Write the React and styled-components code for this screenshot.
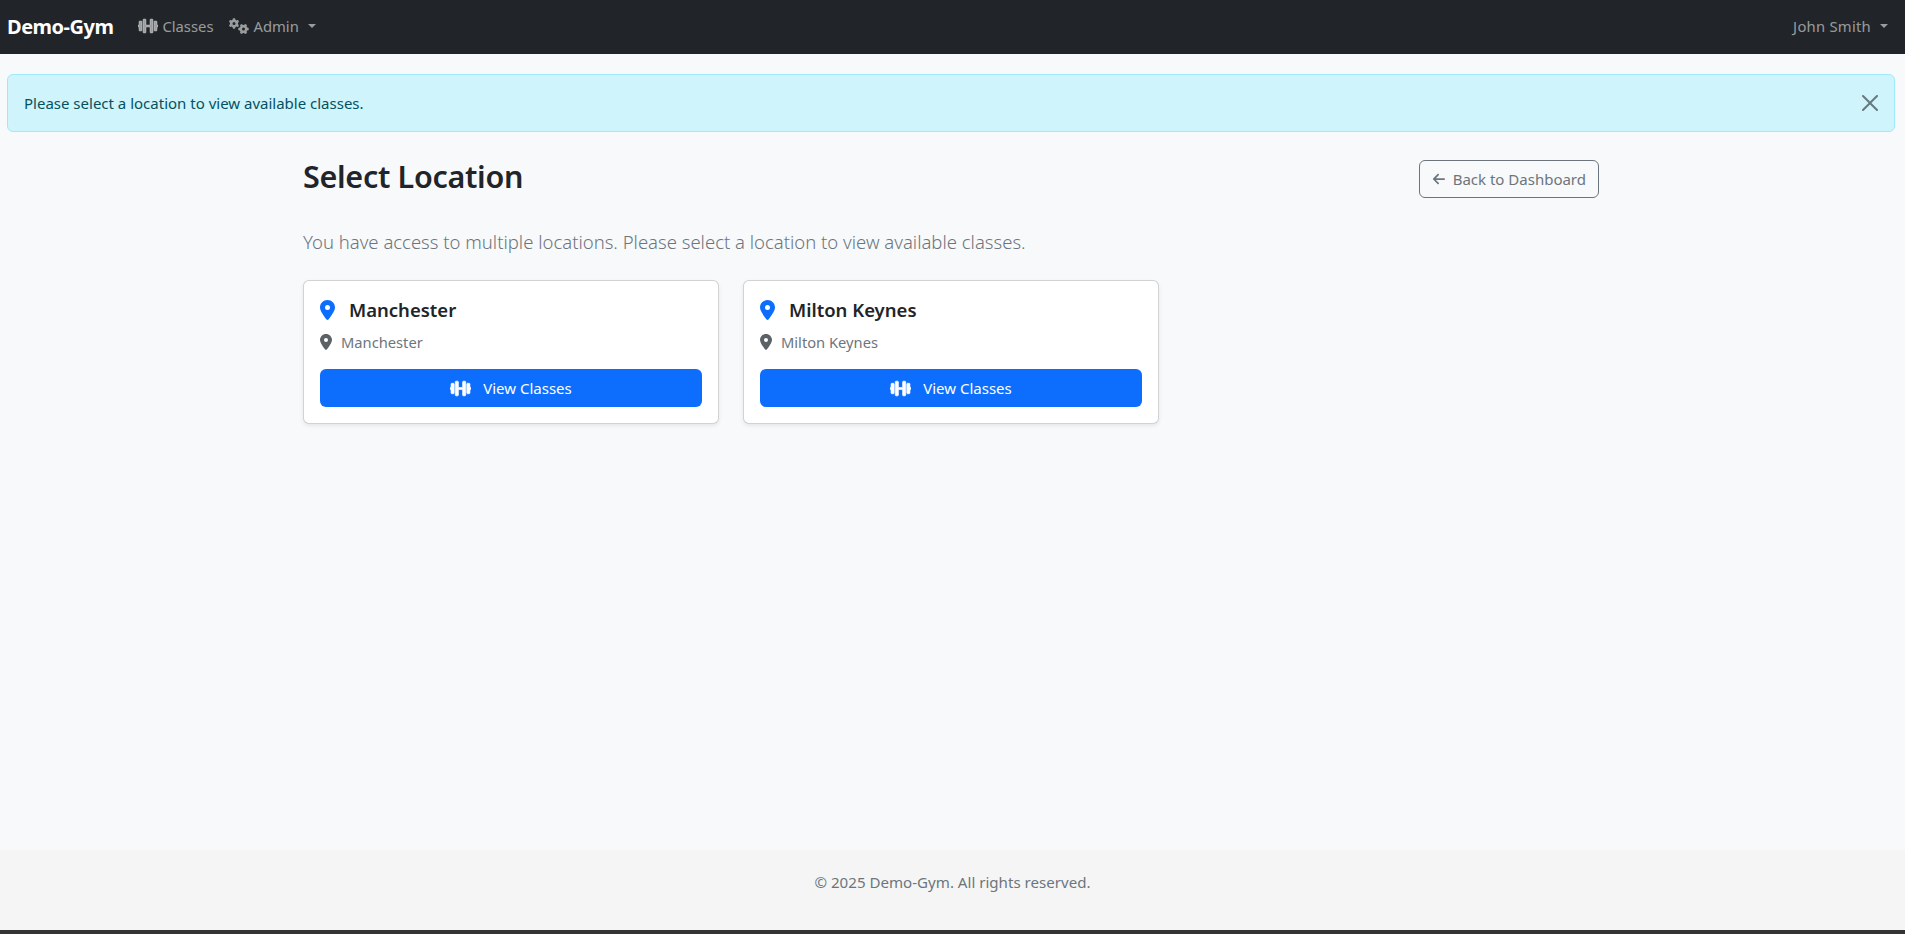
import React from 'react';
import styled, { createGlobalStyle } from 'styled-components';
import { FaDumbbell } from 'react-icons/fa';
import { FaGears, FaLocationDot, FaArrowLeft } from 'react-icons/fa6';

const GlobalStyle = createGlobalStyle`
  html, body {
    margin: 0;
    padding: 0;
    background-color: #f8f9fa;
  }
  body {
    font-family: "Noto Sans", "Open Sans", sans-serif;
    font-size: 15px;
    color: #212529;
  }
  * {
    box-sizing: border-box;
  }
`;

const Page = styled.div`
  display: flex;
  flex-direction: column;
  height: 934px;
  overflow: hidden;
`;

const Navbar = styled.nav`
  display: flex;
  align-items: center;
  justify-content: space-between;
  height: 54px;
  padding: 0 17px 2px 7px;
  background-color: #212529;
  flex-shrink: 0;
`;

const NavLeft = styled.div`
  display: flex;
  align-items: center;
`;

const Brand = styled.a`
  font-size: 20px;
  font-weight: 700;
  color: #fff;
  margin-right: 25px;
  letter-spacing: -0.5px;
`;

const NavItem = styled.a`
  display: flex;
  align-items: center;
  gap: 4px;
  font-size: 14.8px;
  color: rgba(255, 255, 255, 0.55);
  margin-right: 16px;
  &:last-child {
    margin-right: 0;
  }
  svg {
    font-size: 20px;
  }
`;

const UserItem = styled(NavItem)`
  letter-spacing: 0.25px;
`;

const Dumbbell = styled(FaDumbbell)`
  stroke-width: 20px;
`;

const Caret = styled.span`
  display: inline-block;
  margin-left: 5px;
  border-top: 4.5px solid currentColor;
  border-left: 4.5px solid transparent;
  border-right: 4.5px solid transparent;
`;

const Alert = styled.div`
  display: flex;
  align-items: center;
  justify-content: space-between;
  height: 58px;
  margin: 20px 10px 0 7px;
  padding: 0 16px;
  background-color: #cff4fc;
  border: 1px solid #9eeaf9;
  border-radius: 6px;
  color: #055160;
  font-size: 15px;
  flex-shrink: 0;
`;

const CloseIcon = styled.svg`
  width: 16px;
  height: 16px;
  opacity: 0.5;
`;

const Main = styled.main`
  flex: 1;
  width: 1296px;
  margin-left: 303px;
  padding-top: 24px;
`;

const Header = styled.div`
  display: flex;
  align-items: flex-start;
  justify-content: space-between;
  margin-bottom: 29px;
`;

const Title = styled.h1`
  margin: 1px 0 0;
  font-size: 30.5px;
  font-weight: 600;
  line-height: 38px;
  letter-spacing: -0.3px;
`;

const BackButton = styled.a`
  display: flex;
  align-items: center;
  gap: 7px;
  height: 38px;
  padding: 0 12px;
  border: 1px solid #6c757d;
  border-radius: 6px;
  color: #6c757d;
  font-size: 15px;
  margin-top: 4px;
`;

const Lead = styled.p`
  margin: 0 0 23px;
  font-size: 18.5px;
  font-weight: 300;
  line-height: 30px;
  color: #6c757d;
`;

const CardRow = styled.div`
  display: grid;
  grid-template-columns: repeat(3, 416px);
  gap: 24px;
`;

const Card = styled.div`
  height: 144px;
  padding: 16px;
  background-color: #fff;
  border: 1px solid rgba(0, 0, 0, 0.175);
  border-radius: 6px;
  box-shadow: 0 2px 4px rgba(0, 0, 0, 0.075);
`;

const CardTitle = styled.h5`
  display: flex;
  align-items: center;
  gap: 14px;
  margin: 0 0 7px;
  font-size: 18.5px;
  font-weight: 600;
  line-height: 26px;
  svg {
    width: 15px;
    height: 20px;
    color: #0d6efd;
  }
`;

const CardText = styled.p`
  display: flex;
  align-items: center;
  gap: 9px;
  margin: 0 0 15px;
  font-size: 14.7px;
  line-height: 24px;
  color: #6c757d;
  svg {
    width: 12px;
    height: 16px;
    color: #5c6166;
  }
`;

const ViewButton = styled.a`
  display: flex;
  align-items: center;
  justify-content: center;
  gap: 12px;
  height: 38px;
  background-color: #0d6efd;
  border-radius: 6px;
  color: #fff;
  font-size: 15px;
  svg {
    font-size: 21px;
  }
`;

const Footer = styled.footer`
  height: 80px;
  padding-top: 20px;
  background-color: #f5f5f5;
  color: #6c757d;
  font-size: 15.1px;
  line-height: 24px;
  text-align: center;
  flex-shrink: 0;
`;

const BottomEdge = styled.div`
  height: 4px;
  background-color: #333;
  flex-shrink: 0;
`;

const locations = ['Manchester', 'Milton Keynes'];

export default function App() {
  return (
    <Page>
      <GlobalStyle />
      <Navbar>
        <NavLeft>
          <Brand>Demo-Gym</Brand>
          <NavItem><Dumbbell /> Classes</NavItem>
          <NavItem><FaGears /> Admin <Caret /></NavItem>
        </NavLeft>
        <UserItem>John Smith <Caret /></UserItem>
      </Navbar>
      <Alert>
        Please select a location to view available classes.
        <CloseIcon viewBox="0 0 16 16" fill="#000">
          <path d="M.293.293a1 1 0 0 1 1.414 0L8 6.586 14.293.293a1 1 0 1 1 1.414 1.414L9.414 8l6.293 6.293a1 1 0 0 1-1.414 1.414L8 9.414l-6.293 6.293a1 1 0 0 1-1.414-1.414L6.586 8 .293 1.707a1 1 0 0 1 0-1.414" />
        </CloseIcon>
      </Alert>
      <Main>
        <Header>
          <Title>Select Location</Title>
          <BackButton><FaArrowLeft size={14} /> Back to Dashboard</BackButton>
        </Header>
        <Lead>You have access to multiple locations. Please select a location to view available classes.</Lead>
        <CardRow>
          {locations.map(name => (
            <Card key={name}>
              <CardTitle><FaLocationDot /> {name}</CardTitle>
              <CardText><FaLocationDot /> {name}</CardText>
              <ViewButton><Dumbbell /> View Classes</ViewButton>
            </Card>
          ))}
        </CardRow>
      </Main>
      <Footer>© 2025 Demo-Gym. All rights reserved.</Footer>
      <BottomEdge />
    </Page>
  );
}
